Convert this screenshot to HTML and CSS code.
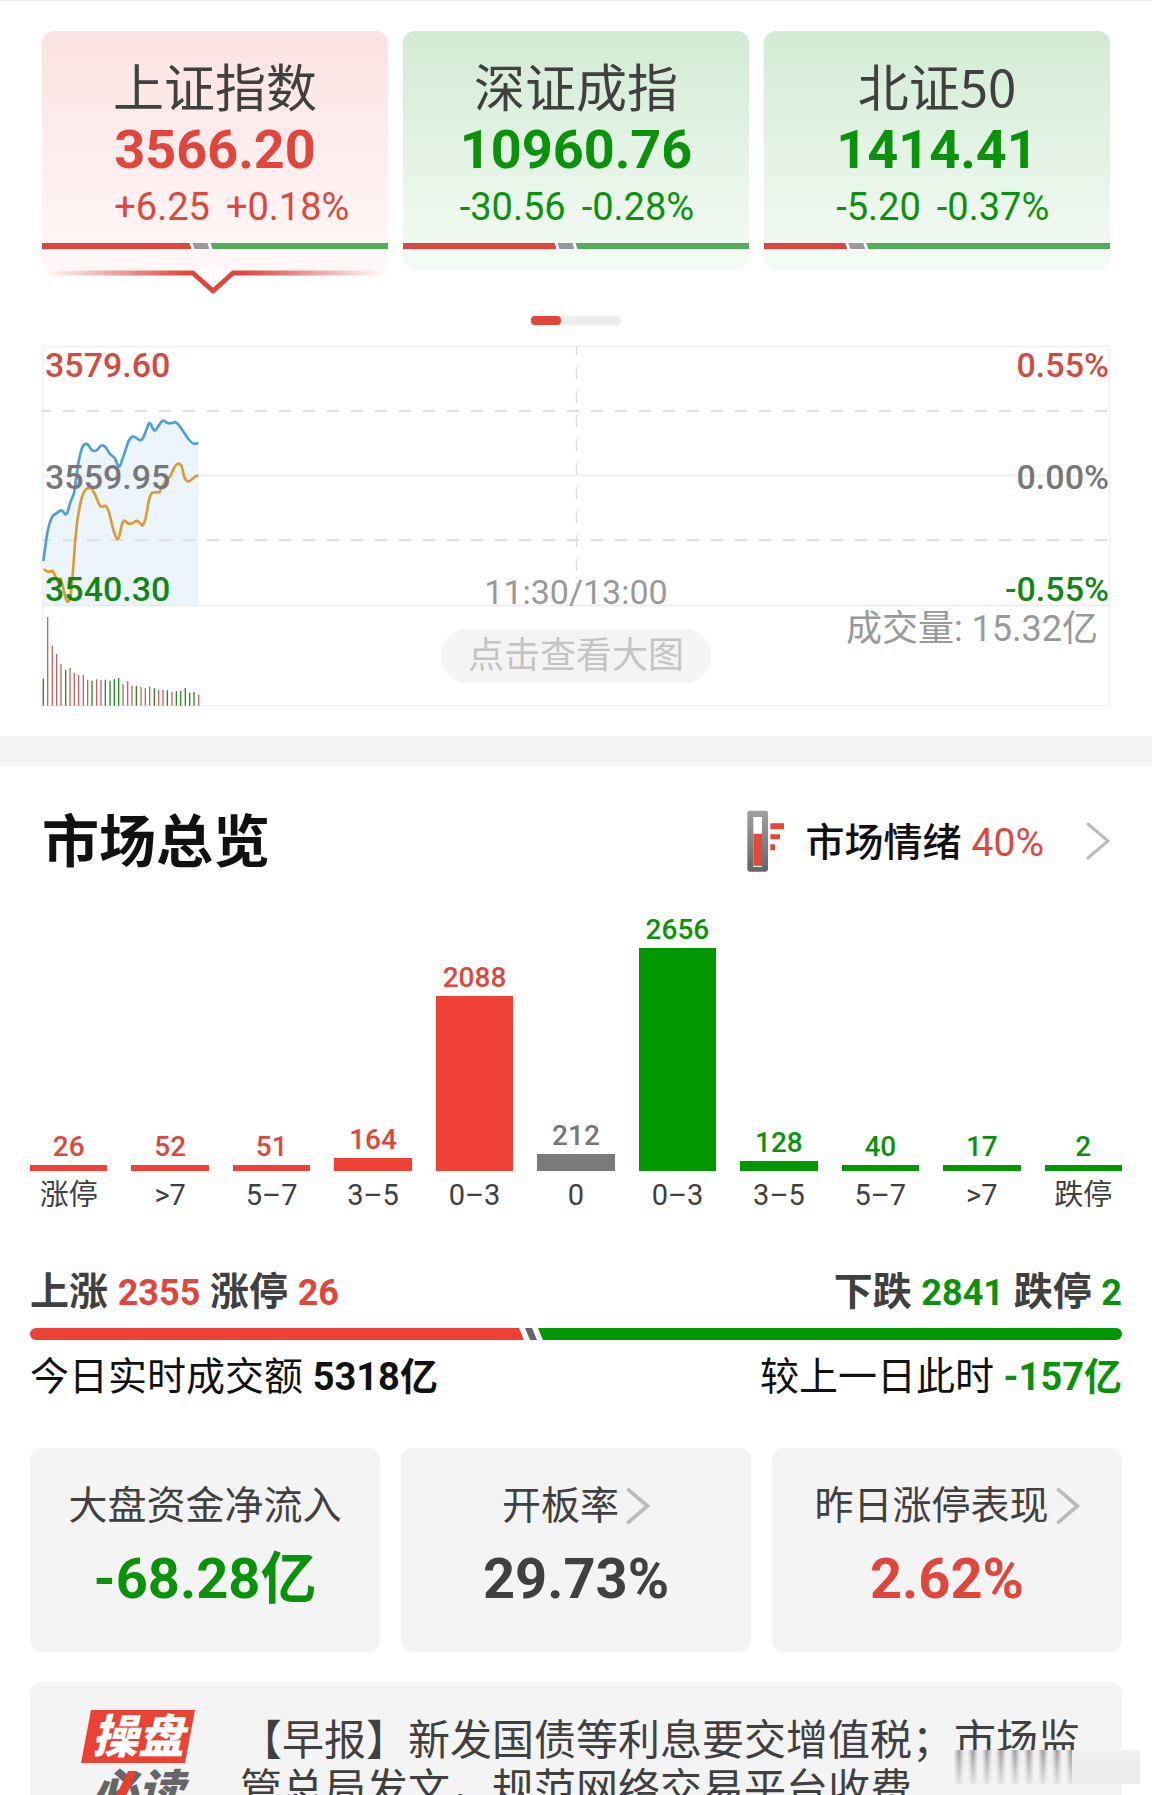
FILE: index.html
```html
<!DOCTYPE html>
<html lang="zh-CN">
<head>
<meta charset="utf-8">
<meta name="viewport" content="width=device-width, initial-scale=1">
<title>市场总览</title>
<link rel="stylesheet" href="styles.css">
</head>
<body>
<main class="page">
  <section class="indices">
    <div class="index-list">
      <button class="index up selected" type="button">
        <span class="index-name">上证指数</span>
        <span class="index-quote"><strong>3566.20</strong><span class="change"><span>+6.25</span><span>+0.18%</span></span></span>
        <span class="split"><i class="rise" style="flex-grow:149"></i><i class="flat"></i><i class="fall" style="flex-grow:177"></i></span>
        <svg class="pointer" viewBox="0 0 346 24" aria-hidden="true">
          <defs><linearGradient id="fade" gradientUnits="userSpaceOnUse" x1="0" y1="0" x2="346" y2="0"><stop offset="0" stop-color="#e0463c" stop-opacity="0"/><stop offset=".42" stop-color="#e0463c"/><stop offset=".58" stop-color="#e0463c"/><stop offset="1" stop-color="#e0463c" stop-opacity="0"/></linearGradient></defs>
          <path d="M0 3H151L171 21L191 3H346" fill="none" stroke="url(#fade)" stroke-width="5" stroke-linejoin="round"/>
        </svg>
      </button>
      <button class="index down" type="button">
        <span class="index-name">深证成指</span>
        <span class="index-quote"><strong>10960.76</strong><span class="change"><span>-30.56</span><span>-0.28%</span></span></span>
        <span class="split"><i class="rise" style="flex-grow:153"></i><i class="flat"></i><i class="fall" style="flex-grow:173"></i></span>
      </button>
      <button class="index down" type="button">
        <span class="index-name">北证50</span>
        <span class="index-quote"><strong>1414.41</strong><span class="change"><span>-5.20</span><span>-0.37%</span></span></span>
        <span class="split"><i class="rise" style="flex-grow:83"></i><i class="flat"></i><i class="fall" style="flex-grow:243"></i></span>
      </button>
    </div>
    <div class="pager"><span></span></div>

    <div class="chart">
      <svg class="plot" viewBox="126 48 3204 1080" aria-hidden="true">
        <path class="area" d="M130 693L140 620 150 575 162 553 182 541 198 553 210 520 222 490 235 400 248 350 258 342 268 348 282 363 308 347 330 372 345 385 358 411 385 335 398 320 415 328 433 315 450 280 465 301 490 271 505 276 525 276 545 297 565 327 583 342 595 338V825H130Z"/>
        <path class="rule" d="M127.500 49.500H3328.500V1126.500H127.500Z"/>
        <path class="rule strong" d="M126 436.500H3330M126 826.500H3330"/>
        <path class="dash" d="M126 243H3330M126 631H3330"/>
        <path class="dash thin" d="M1729.500 48V770"/>
        <path class="line average" d="M132 717Q138 726 145 725T157 722Q160 726 165 737T175 758L182 745 190 775 198 808Q205 825 212 800L218 735 225 640 232 570 242 515Q250 485 258 478T275 476Q284 488 292 510T305 530L316 527Q324 535 328 550L340 600 348 622Q354 634 358 618L366 582Q372 566 378 575T398 580Q408 570 414 574T427 587Q434 580 437 565L445 520Q450 490 458 488T478 487L495 455 510 440 523 412Q535 392 545 408L552 438Q558 456 566 454T583 441L595 436"/>
        <path class="line price" d="M130 693L140 620Q148 570 160 556L182 541Q190 543 193 550T202 548L210 520 222 490 235 400Q244 350 252 344T266 346Q274 362 282 363T298 352 318 353L330 372 345 385 354 408Q358 416 364 397L385 335Q392 321 398 320T415 328 433 315L445 284Q450 273 456 290T468 299L484 275Q490 268 498 276T525 276Q534 280 545 297L565 327Q578 342 583 342T595 338"/>
        <path class="volume buy" d="M143 1127V861M157 1127V947M170 1127V972M183 1127V1001M210 1127V1013M223 1127V1028M236 1127V1035M250 1127V1035M263 1127V1049M290 1127V1048M303 1127V1050M369 1127V1062M383 1127V1053M396 1127V1067M423 1127V1071M436 1127V1074M449 1127V1069M476 1127V1080M489 1127V1080M516 1127V1085M596 1127V1094"/>
        <path class="volume sell" d="M130 1127V1046M197 1127V1020M276 1127V1052M316 1127V1049M330 1127V1052M343 1127V1048M356 1127V1044M409 1127V1067M463 1127V1075M502 1127V1081M529 1127V1084M542 1127V1083M556 1127V1074M569 1127V1088M582 1127V1086"/>
      </svg>
      <div class="axis">
        <div class="axis-row red"><span>3579.60</span><span>0.55%</span></div>
        <div class="axis-row gray"><span>3559.95</span><span>0.00%</span></div>
        <div class="axis-row green"><span>3540.30</span><span>-0.55%</span></div>
      </div>
      <span class="session">11:30/13:00</span>
      <span class="turnover">成交量: 15.32亿</span>
      <button class="expand" type="button">点击查看大图</button>
    </div>
  </section>

  <section class="overview">
    <header class="heading">
      <h2>市场总览</h2>
      <a class="mood" href="#mood">
        <svg class="thermo" viewBox="138 89 114 186" aria-hidden="true">
          <defs><linearGradient id="tube" x1="0" y1="0" x2="0" y2="1"><stop offset="0" stop-color="#a0a0a0"/><stop offset="1" stop-color="#666"/></linearGradient></defs>
          <rect x="139" y="91" width="62" height="183" rx="7" fill="url(#tube)"/>
          <rect x="157" y="110" width="26" height="150" fill="#fff"/>
          <path d="M157 160H183V256H157ZM208 129H249V147H208ZM208 162H237V177H208ZM208 192H222V210H208Z" fill="#e5473a"/>
        </svg>
        <span class="mood-name">市场情绪</span>
        <span class="mood-value">40%</span>
        <svg class="chevron" viewBox="0 0 24 38" aria-hidden="true"><path d="M2 2L22 19 2 36"/></svg>
      </a>
    </header>

    <div class="histogram">
      <div class="col red"><b>26</b><i style="height:6px"></i><span>涨停</span></div>
      <div class="col red"><b>52</b><i style="height:6px"></i><span>&gt;7</span></div>
      <div class="col red"><b>51</b><i style="height:6px"></i><span>5–7</span></div>
      <div class="col red"><b>164</b><i style="height:13px"></i><span>3–5</span></div>
      <div class="col red"><b>2088</b><i style="height:175px"></i><span>0–3</span></div>
      <div class="col gray"><b>212</b><i style="height:17px"></i><span>0</span></div>
      <div class="col green"><b>2656</b><i style="height:223px"></i><span>0–3</span></div>
      <div class="col green"><b>128</b><i style="height:10px"></i><span>3–5</span></div>
      <div class="col green"><b>40</b><i style="height:6px"></i><span>5–7</span></div>
      <div class="col green"><b>17</b><i style="height:6px"></i><span>&gt;7</span></div>
      <div class="col green"><b>2</b><i style="height:6px"></i><span>跌停</span></div>
    </div>

    <div class="row counts">
      <p>上涨 <em class="red">2355</em> 涨停 <em class="red">26</em></p>
      <p>下跌 <em class="green">2841</em> 跌停 <em class="green">2</em></p>
    </div>
    <div class="split wide"><i class="rise" style="flex-grow:494"></i><i class="flat"></i><i class="fall" style="flex-grow:584"></i></div>
    <div class="row amounts">
      <p>今日实时成交额 <strong>5318亿</strong></p>
      <p>较上一日此时 <strong class="green">-157亿</strong></p>
    </div>

    <div class="metrics">
      <div class="metric"><span class="metric-name">大盘资金净流入</span><strong class="green">-68.28亿</strong></div>
      <a class="metric" href="#open-rate"><span class="metric-name">开板率<svg class="chevron" viewBox="0 0 24 38" aria-hidden="true"><path d="M2 2L22 19 2 36"/></svg></span><strong>29.73%</strong></a>
      <a class="metric" href="#limit-up"><span class="metric-name">昨日涨停表现<svg class="chevron" viewBox="0 0 24 38" aria-hidden="true"><path d="M2 2L22 19 2 36"/></svg></span><strong class="red">2.62%</strong></a>
    </div>

    <a class="news" href="#news">
      <span class="logo"><b>操盘</b><span>必读<svg class="tick" viewBox="0 0 30 44" aria-hidden="true"><path d="M21 0H30L11 44H0Z" fill="#e8402f"/></svg></span></span>
      <span class="news-text">【早报】新发国债等利息要交增值税；市场监管总局发文，规范网络交易平台收费</span>
      <span class="smear" aria-hidden="true"></span>
    </a>
  </section>
</main>
</body>
</html>
```
FILE: styles.css
```css
* { box-sizing: border-box; }

body {
  margin: 0;
  background: #fff;
  color: #404040;
  font-family: Roboto, "Noto Sans CJK SC", sans-serif;
}

p, h2 { margin: 0; }
a { color: inherit; text-decoration: none; }
button { border: 0; padding: 0; font: inherit; color: inherit; cursor: pointer; }
em, i { font-style: normal; }

.red { color: #e0463c; }
.green { color: #0a930a; }
.gray { color: #777; }

.page {
  height: 100vh;
  overflow: hidden;
  border-top: 1px solid #ececec;
}

/* Index cards */
.indices { padding: 30px 42px; }

.index-list {
  display: grid;
  grid-template-columns: repeat(3, 1fr);
  gap: 15px;
}

.index {
  position: relative;
  display: flex;
  flex-direction: column;
  align-items: center;
  padding: 26px 0 21px;
  border-radius: 12px;
}
.index.up { background: linear-gradient(#fce2e2, #fff8f8); color: #e0463c; }
.index.down { background: linear-gradient(#d2ebd4, #f5fbf6); color: #0a930a; }

.index-name {
  font: 51px/56px "Noto Sans CJK SC", sans-serif;
  color: #404040;
}

.index-quote {
  display: flex;
  flex-direction: column;
  gap: 5px;
  margin: 7px 0 14px;
}
.index-quote strong { font-size: 54px; line-height: 60px; }

/* The change line starts under the price and may run past it */
.change {
  display: flex;
  gap: 16px;
  width: 0;
  font-size: 38px;
  line-height: 44px;
  white-space: nowrap;
}

.split {
  --lean: 2px;
  display: flex;
  gap: 1px;
  align-self: stretch;
  height: 6px;
  background: #fff;
}
.split i { flex: 0 0 0; }
.rise { background: #de463d; clip-path: polygon(0 0, calc(100% - var(--lean)) 0, 100% 100%, 0 100%); }
.split .flat { flex-basis: 17px; background: #999; clip-path: polygon(0 0, calc(100% - var(--lean)) 0, 100% 100%, var(--lean) 100%); }
.fall { background: #54ab58; clip-path: polygon(0 0, 100% 0, 100% 100%, var(--lean) 100%); }

.split.wide {
  --lean: 5px;
  height: 12px;
  margin: 13px 0 15px;
  border-radius: 6px;
  overflow: hidden;
}
.wide .rise { background: #ec4135; }
.wide .flat { flex-basis: 12px; background: #666; }
.wide .fall { background: #049804; }

.pointer {
  position: absolute;
  top: 100%;
  left: 0;
  width: 100%;
}

.pager {
  width: 90px;
  height: 9px;
  margin: 46px auto 21px;
  border-radius: 4px;
  background: #ededed;
}
.pager span {
  display: block;
  width: 30px;
  height: 100%;
  border-radius: 4px;
  background: #e5443a;
}

/* Intraday chart */
.chart { position: relative; }
.plot { display: block; width: 100%; }
.plot path { fill: none; }
.plot .area { fill: #edf5fc; }
.rule { stroke: #f0f0f0; stroke-width: 3; }
.rule.strong { stroke: #e9ebed; stroke-width: 5; }
.dash { stroke: #ddd; stroke-width: 6; stroke-dasharray: 36 36; stroke-dashoffset: 9; }
.dash.thin { stroke-width: 4; }
.line { stroke-width: 8; stroke-linejoin: round; }
.average { stroke: #dc9c33; }
.price { stroke: #4f9fd6; }
.volume { stroke-width: 4; }
.buy { stroke: #c8645f; }
.sell { stroke: #248c24; }

.axis {
  position: absolute;
  inset: -1px 1px auto 3px;
  display: grid;
  gap: 72px;
}
.axis-row {
  display: flex;
  justify-content: space-between;
  font-size: 34px;
  font-weight: 500;
  line-height: 40px;
}
.axis-row.red { color: #d14b42; }
.axis-row.green { color: #128612; }

.session {
  position: absolute;
  top: 226px;
  left: 0;
  right: 0;
  text-align: center;
  font-size: 34px;
  line-height: 40px;
  color: #999;
}
.turnover {
  position: absolute;
  top: 261px;
  right: 12px;
  font-size: 36px;
  line-height: 44px;
  color: #999;
}
.expand {
  position: absolute;
  top: 283px;
  left: 50%;
  transform: translateX(-50%);
  padding: 0 27px;
  border-radius: 28px;
  background: #f4f4f4;
  color: #c4c4c4;
  font-size: 36px;
  line-height: 54px;
  white-space: nowrap;
}

/* Market overview */
.overview {
  padding: 42px 30px 0;
  border-top: 30px solid #f4f4f4;
}

.heading {
  display: flex;
  align-items: center;
  justify-content: space-between;
  margin: 0 12px 40px;
}
.heading h2 { padding-top: 4px; font-size: 57px; line-height: 62px; color: #111; }

.mood { display: flex; align-items: center; font-size: 39px; line-height: 44px; }
.thermo { width: 38px; height: 62px; margin-right: 21px; }
.mood-name { margin-right: 10px; padding-top: 4px; font-weight: 500; color: #111; }
.mood-value { padding-top: 4px; color: #e0463c; }
.mood .chevron { margin-left: 42px; }

.chevron {
  width: 24px;
  height: 38px;
  fill: none;
  stroke: #bbb;
  stroke-width: 3;
  stroke-linecap: round;
}

.histogram {
  display: grid;
  grid-template-columns: repeat(11, 1fr);
  gap: 24px;
  align-items: end;
}
.col { display: flex; flex-direction: column; align-items: center; }
.col b { margin-bottom: 2px; font-size: 28px; font-weight: 500; line-height: 32px; }
.col i { align-self: stretch; background: #ef4135; }
.col.gray i { background: #7b7b7b; }
.col.green i { background: #049804; }
.col span { margin-top: 6px; font-size: 29px; line-height: 36px; color: #404040; }

.row { display: flex; justify-content: space-between; font-size: 39px; line-height: 44px; }
.counts { margin-top: 57px; font-weight: 700; }
.counts em { font-size: 36px; }
.amounts { color: #111; }
.amounts strong { font-size: 38px; }

.metrics {
  display: grid;
  grid-template-columns: repeat(3, 1fr);
  gap: 21px;
  margin: 49px 0 30px;
}
.metric {
  display: flex;
  flex-direction: column;
  align-items: center;
  gap: 19px;
  padding: 34px 0 43px;
  border-radius: 12px;
  background: #f4f4f4;
}
.metric-name {
  display: flex;
  align-items: center;
  gap: 7px;
  font-size: 39px;
  line-height: 48px;
}
.metric-name .chevron { height: 36px; stroke-width: 4; }
.metric strong { font-size: 56px; line-height: 60px; }

.news {
  position: relative;
  display: flex;
  align-items: flex-start;
  gap: 45px;
  padding: 28px 30px 28px 51px;
  border-radius: 12px;
  background: #f4f4f4;
}
.logo {
  display: grid;
  flex: none;
  gap: 3px;
  width: 114px;
  font-size: 46px;
  font-weight: 900;
  font-style: italic;
  text-align: center;
}
.logo b {
  padding-top: 2px;
  font-weight: 900;
  line-height: 51px;
  color: #fff;
  background: #ea4335;
  clip-path: polygon(10px 0, 100% 0, calc(100% - 10px) 100%, 0 100%);
}
.logo > span { position: relative; line-height: 53px; color: #666; }
.tick { position: absolute; left: 26px; top: 5px; width: 30px; height: 44px; }

.news-text {
  flex: 1;
  margin-top: 6px;
  font-size: 42px;
  line-height: 49px;
}

/* Faded watermark at the end of the first line */
.smear {
  position: absolute;
  top: 68px;
  right: -18px;
  width: 186px;
  height: 34px;
  background:
    linear-gradient(#f4f4f400, #f4f4f4cc),
    repeating-linear-gradient(90deg, #f0f0f0 0, #999 5px, #f0f0f0 10px 14px) 0 0 / 118px 100% no-repeat,
    linear-gradient(#f3f3f3, #dcdcdc);
}
```
